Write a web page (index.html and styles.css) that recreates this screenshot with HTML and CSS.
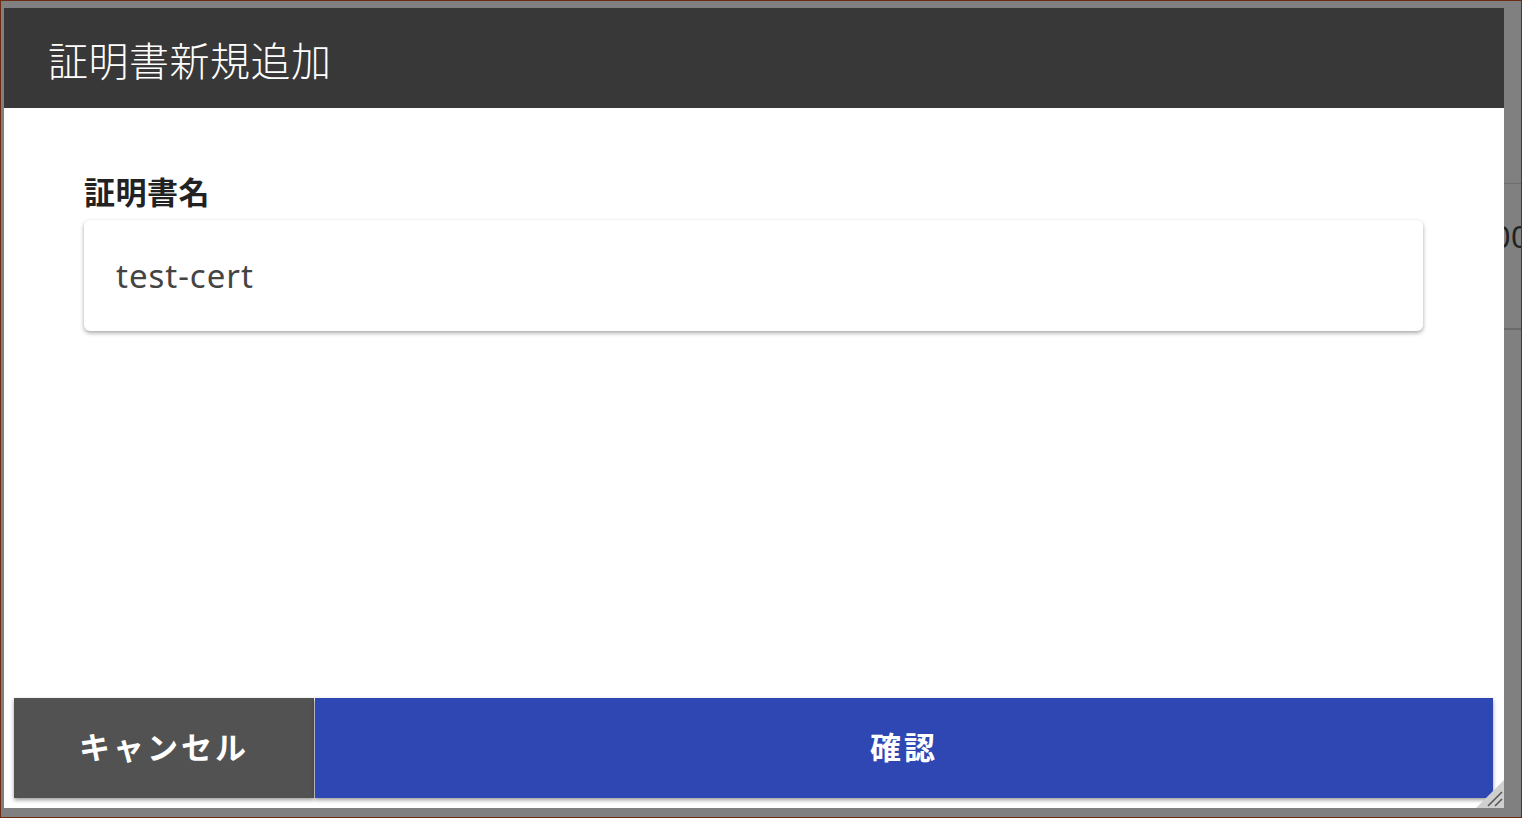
FILE: index.html
```html
<!DOCTYPE html>
<html lang="ja">
<head>
<meta charset="utf-8">
<title>証明書新規追加</title>
<link rel="stylesheet" href="styles.css">
</head>
<body>
<div class="frame">
  <div class="dialog">
    <div class="dialog-header">
      <h1 class="dialog-title">証明書新規追加</h1>
    </div>
    <div class="dialog-body">
      <div class="form">
        <label class="field-label" for="cert-name">証明書名</label>
        <div class="field-input" id="cert-name">test-cert</div>
      </div>
      <div class="actions">
        <button class="btn btn-cancel" type="button">キャンセル</button>
        <button class="btn btn-confirm" type="button">確認</button>
      </div>
    </div>
    <svg class="grip" width="28" height="28" viewBox="0 0 28 28">
      <polygon points="28,0 28,28 0,28" fill="#cfcfcf"/>
      <line x1="26" y1="12" x2="12" y2="26" stroke="#555" stroke-width="1.6"/>
      <line x1="26" y1="19" x2="19" y2="26" stroke="#555" stroke-width="1.6"/>
    </svg>
  </div>
  <div class="side">
    <div class="side-row"><span class="side-text">00</span></div>
  </div>
</div>
</body>
</html>
```

FILE: styles.css
```css
* { box-sizing: border-box; }

html, body {
  margin: 0;
  padding: 0;
  background: #808080;
}

body {
  font-family: "Noto Sans CJK JP", "Noto Sans", sans-serif;
}

.frame {
  width: 1522px;
  height: 818px;
  border: 1px solid #6b2d12;
  background: #808080;
  padding: 7px 0 9px 3px;
  display: flex;
  overflow: hidden;
}

.dialog {
  position: relative;
  width: 1500px;
  height: 800px;
  background: #ffffff;
  display: flex;
  flex-direction: column;
  flex: none;
}

.dialog-header {
  height: 100px;
  background: #383838;
  display: flex;
  align-items: center;
  padding: 2px 0 0 44px;
  flex: none;
}

.dialog-title {
  margin: 0;
  color: #ffffff;
  font-size: 40px;
  font-weight: 300;
  line-height: 1;
  letter-spacing: 0.5px;
}

.dialog-body {
  flex: 1;
  display: flex;
  flex-direction: column;
  padding: 0 11px 10px 10px;
}

.form {
  padding: 63px 70px 0 70px;
  display: flex;
  flex-direction: column;
}

.field-label {
  font-size: 31px;
  font-weight: 700;
  color: #222222;
  line-height: 40px;
  letter-spacing: 0.5px;
  margin-bottom: 9px;
}

.field-input {
  height: 111px;
  border-radius: 6px;
  background: #ffffff;
  box-shadow: 0 2px 4px rgba(0, 0, 0, 0.35);
  padding-left: 32px;
  display: flex;
  align-items: center;
  font-family: "Noto Sans", sans-serif;
  font-size: 33px;
  letter-spacing: 1px;
  color: #444444;
}

.actions {
  margin-top: auto;
  height: 100px;
  display: flex;
  gap: 1px;
}

.btn {
  border: 0;
  margin: 0;
  height: 100px;
  padding: 0 0 6px 0;
  color: #ffffff;
  font-family: "Noto Sans CJK JP", sans-serif;
  font-size: 31px;
  font-weight: 700;
  letter-spacing: 3px;
  box-shadow: 0 2px 4px rgba(0, 0, 0, 0.4);
  cursor: pointer;
}

.btn-cancel {
  width: 300px;
  background: #525252;
}

.btn-confirm {
  flex: 1;
  background: #2f47b3;
}

.grip {
  position: absolute;
  right: 0;
  bottom: 0;
  display: block;
}

.side {
  flex: 1;
  overflow: hidden;
}

.side-row {
  margin-top: 175px;
  height: 147px;
  border-top: 1px solid #6e6e6e;
  border-bottom: 2px solid #6a6a6a;
  display: flex;
  align-items: center;
}

.side-text {
  margin-left: -11px;
  margin-top: -36px;
  font-family: "Liberation Sans", sans-serif;
  font-size: 31px;
  letter-spacing: 1px;
  color: #222222;
  white-space: nowrap;
}
```
